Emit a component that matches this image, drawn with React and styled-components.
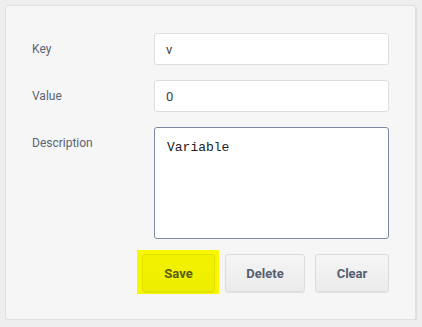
import styled, { createGlobalStyle } from "styled-components"

const Global = createGlobalStyle`
    html, body {
        margin: 0;
        padding: 0;
        background: #eeeeee;
        font-family: Roboto, "Liberation Sans", sans-serif;
    }
`

const Panel = styled.div`
    margin: 5px 0 0 5px;
    width: 411px;
    height: 315px;
    box-sizing: border-box;
    background: #f6f6f6;
    border: 1px solid #e0e0e4;
    border-radius: 3px;
    box-shadow: 1px 1px 1px rgba(0, 0, 0, 0.08);
    padding: 27px 26px 27px 26px;
    display: flex;
    flex-direction: column;
    gap: 15px;
`

const Row = styled.div`
    display: flex;
    align-items: flex-start;
`

const Label = styled.label`
    width: 122px;
    line-height: 32px;
    font-size: 12px;
    color: #5b6475;
`

const Input = styled.input`
    width: 235px;
    height: 32px;
    box-sizing: border-box;
    border: 1px solid #dcdee4;
    border-radius: 3px;
    background: #fff;
    padding: 0 11px;
    font-family: Roboto, "Liberation Sans", sans-serif;
    font-size: 13px;
    color: #3a3f4a;
    outline: none;
`

const TextArea = styled.textarea`
    width: 235px;
    height: 112px;
    box-sizing: border-box;
    border: 1px solid #7d8aa4;
    border-radius: 3px;
    background: #fff;
    padding: 12px 12px;
    font-family: "Liberation Mono", monospace;
    font-size: 13px;
    color: #222;
    resize: none;
    outline: none;
`

const Buttons = styled.div`
    display: flex;
    justify-content: flex-end;
    align-items: flex-start;
    gap: 10px;
`

const Highlight = styled.span`
    display: inline-flex;
    background: #f7f700;
    padding: 4px 4px 2px 5px;
    margin: -4px -4px 0 0;
`

const Button = styled.button`
    width: ${p => p.$w}px;
    height: 38px;
    box-sizing: border-box;
    border: 1px solid ${p => (p.$yellow ? "#e2e200" : "#dcdcdc")};
    border-radius: 3px;
    background: ${p =>
        p.$yellow
            ? "linear-gradient(#f2f200, #eeee00)"
            : "linear-gradient(#f5f5f5, #ebebeb)"};
    box-shadow: 0 1px 1px rgba(0, 0, 0, 0.08);
    font-family: Roboto, "Liberation Sans", sans-serif;
    font-size: 13px;
    font-weight: 700;
    color: ${p => (p.$yellow ? "#5c5c14" : "#566072")};
    cursor: pointer;
`

const App = () => {
    return (
        <>
            <Global />
            <Panel>
                <Row>
                    <Label>Key</Label>
                    <Input defaultValue="v" />
                </Row>
                <Row>
                    <Label>Value</Label>
                    <Input defaultValue="0" />
                </Row>
                <Row>
                    <Label>Description</Label>
                    <TextArea defaultValue="Variable" />
                </Row>
                <Buttons>
                    <Highlight>
                        <Button $yellow $w={73}>Save</Button>
                    </Highlight>
                    <Button $w={80}>Delete</Button>
                    <Button $w={74}>Clear</Button>
                </Buttons>
            </Panel>
        </>
    )
}

export default App
